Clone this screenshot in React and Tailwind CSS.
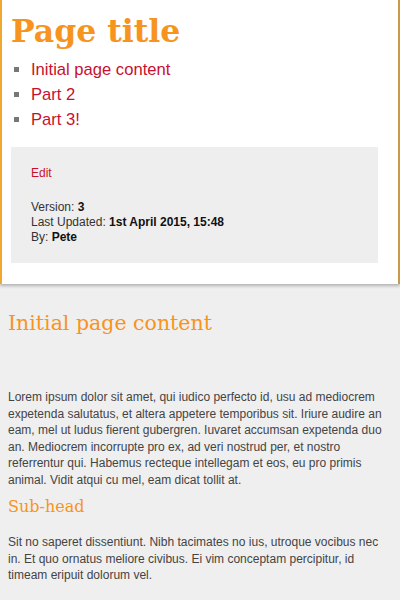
export default function App() {
  return (
    <div className="min-h-[600px] bg-[#efefef] font-['Liberation_Sans',Arial,sans-serif]">
      {/* Page card */}
      <div className="bg-white border-l-2 border-l-[#f0a830] border-r-2 border-r-[#c99a4e] shadow-[0_2px_3px_rgba(0,0,0,0.25)] pl-[9px] pr-5 pt-[11px] pb-[21px]">
        <h1 className="font-['DejaVu_Serif',Georgia,serif] font-bold text-[31.5px] leading-[40px] text-[#f7941d]">
          Page title
        </h1>
        <ul className="mt-[6px] pl-[20px] list-[square] marker:text-[#777] text-[16.6px] leading-[25px] text-[#c8102e]">
          <li>Initial page content</li>
          <li>Part 2</li>
          <li>Part 3!</li>
        </ul>
        <div className="mt-[15px] bg-[#eeeeee] px-5 pt-[19px] pb-[18px]">
          <a className="block text-[12px] leading-[15px] text-[#c8102e]">Edit</a>
          <div className="mt-[19px] text-[12px] leading-[15px] text-[#333]">
            <div>
              Version: <b className="text-[#111]">3</b>
            </div>
            <div>
              Last Updated: <b className="text-[#111]">1st April 2015, 15:48</b>
            </div>
            <div>
              By: <b className="text-[#111]">Pete</b>
            </div>
          </div>
        </div>
      </div>

      {/* Content */}
      <div className="px-2 pt-[24px] pb-6 text-[#444]">
        <h2 className="font-['DejaVu_Serif',Georgia,serif] text-[20.5px] leading-[30px] text-[#f7941d]">
          Initial page content
        </h2>
        <p className="mt-[51px] text-[12px] leading-[16.5px]">
          Lorem ipsum dolor sit amet, qui iudico perfecto id, usu ad mediocrem expetenda salutatus, et altera appetere temporibus sit. Iriure audire an eam, mel ut ludus fierent gubergren. Iuvaret accumsan expetenda duo an. Mediocrem incorrupte pro ex, ad veri nostrud per, et nostro referrentur qui. Habemus recteque intellegam et eos, eu pro primis animal. Vidit atqui cu mel, eam dicat tollit at.
        </p>
        <h3 className="mt-[7px] font-['DejaVu_Serif',Georgia,serif] text-[16px] leading-[24px] text-[#f7941d]">
          Sub-head
        </h3>
        <p className="mt-[15px] text-[12px] leading-[16.5px]">
          Sit no saperet dissentiunt. Nibh tacimates no ius, utroque vocibus nec in. Et quo ornatus meliore civibus. Ei vim conceptam percipitur, id timeam eripuit dolorum vel.
        </p>
      </div>
    </div>
  );
}
